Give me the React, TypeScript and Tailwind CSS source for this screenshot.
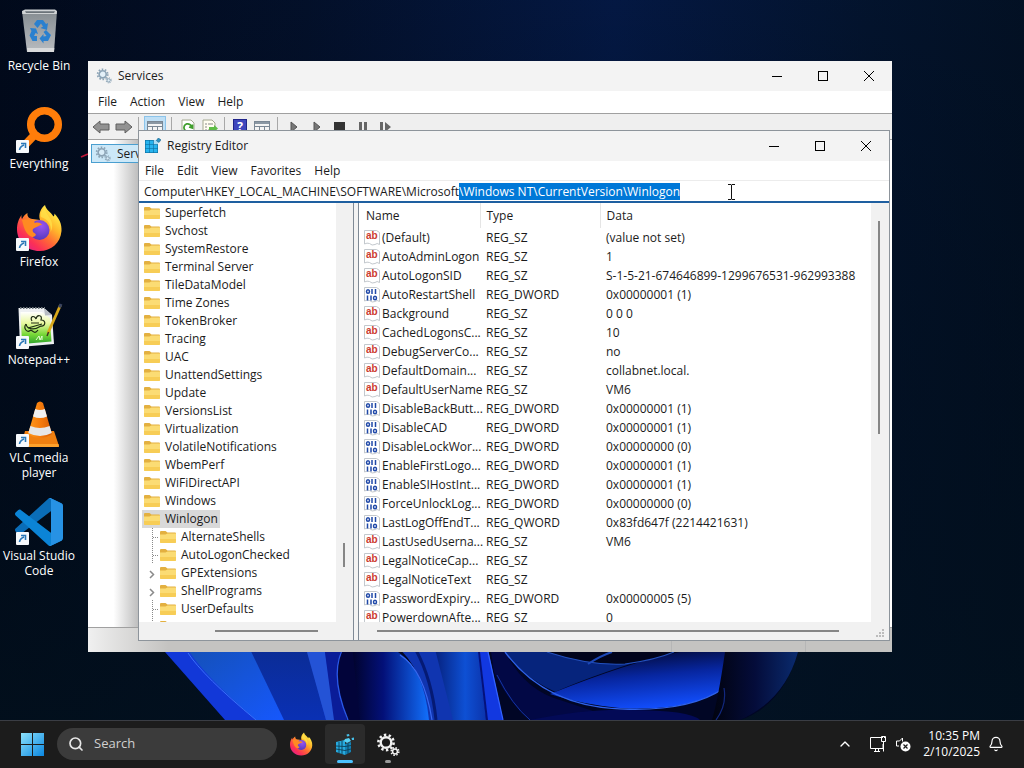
import { useEffect, useRef } from "react";
import type { ReactNode } from "react";
import { Bell, ChevronUp, Search } from "lucide-react";

/* ---------- Wallpaper ---------- */

function Wallpaper() {
  return (
    <svg className="absolute inset-0 h-full w-full" viewBox="0 0 1024 720" preserveAspectRatio="none" aria-hidden="true">
      <defs>
        <linearGradient id="wpBase" x1="0" x2="1" y1="0" y2="0">
          <stop offset="0" stopColor="#010a1c" />
          <stop offset="0.3" stopColor="#03112c" />
          <stop offset="0.6" stopColor="#041a48" />
          <stop offset="0.85" stopColor="#031530" />
          <stop offset="1" stopColor="#031226" />
        </linearGradient>
        <linearGradient id="wpFade" x1="0" x2="0" y1="0" y2="1">
          <stop offset="0" stopColor="#000510" stopOpacity="0.1" />
          <stop offset="1" stopColor="#02101c" stopOpacity="0.8" />
        </linearGradient>
        <linearGradient id="wpA" x1="0" x2="1" y1="0" y2="1">
          <stop offset="0" stopColor="#1450b4" />
          <stop offset="1" stopColor="#1658ff" />
        </linearGradient>
        <linearGradient id="wpB" x1="0" x2="0" y1="0" y2="1">
          <stop offset="0" stopColor="#0b2c94" />
          <stop offset="1" stopColor="#0a30b4" />
        </linearGradient>
        <linearGradient id="wpC" x1="0" x2="1" y1="0" y2="0">
          <stop offset="0" stopColor="#01032c" />
          <stop offset="0.4" stopColor="#031078" />
          <stop offset="1" stopColor="#1272ff" />
        </linearGradient>
        <linearGradient id="wpD" x1="0" x2="1" y1="0" y2="0">
          <stop offset="0" stopColor="#06207c" />
          <stop offset="0.6" stopColor="#0e50d4" />
          <stop offset="1" stopColor="#0b34ac" />
        </linearGradient>
        <linearGradient id="wpE" x1="0.3" x2="0.6" y1="0" y2="1">
          <stop offset="0" stopColor="#02072e" />
          <stop offset="0.45" stopColor="#0726a0" />
          <stop offset="1" stopColor="#124fff" />
        </linearGradient>
        <linearGradient id="wpF" x1="0" x2="1" y1="0" y2="0">
          <stop offset="0" stopColor="#01030f" />
          <stop offset="0.5" stopColor="#040c3a" />
          <stop offset="1" stopColor="#0a2b6e" />
        </linearGradient>
      </defs>
      <rect width="1024" height="720" fill="url(#wpBase)" />
      <rect width="1024" height="720" fill="url(#wpFade)" />
      <path d="M160 645 L165 652 L225 720 H740 Q785 705 800 645 Z" fill="#010625" />
      <path d="M160 645 L165 652 L225 720 H345 L340 645 Z" fill="#1238d8" />
      <path d="M185 645 Q200 672 256 720 H290 L250 645 Z" fill="url(#wpA)" />
      <path d="M188 653 Q203 676 256 720" fill="none" stroke="#3970f8" strokeWidth="1" />
      <path d="M248 645 L284 720 H326 L306 645 Z" fill="url(#wpB)" />
      <path d="M305 645 L326 720 H335 L324 645 Z" fill="#2453d6" />
      <path d="M324 645 L334 720 H347 Q333 670 341 652 Z" fill="#0a1c98" />
      <path d="M345 645 Q328 672 348 720 H400 V645 Z" fill="#02043a" />
      <path d="M345 645 Q328 672 348 720" fill="none" stroke="#2a58e8" strokeWidth="1.3" />
      <path d="M352 645 L360 720 H430 Q425 670 398 652 Z" fill="url(#wpC)" />
      <path d="M395 645 Q424 668 429 720 H454 L435 645 Z" fill="#1035b0" />
      <path d="M400 655 Q424 670 432 720" fill="none" stroke="#3868f0" strokeWidth="1.2" />
      <path d="M416 650 Q432 680 436 720" fill="none" stroke="#051a74" strokeWidth="3" />
      <path d="M434 645 L453 720 H486 L478 645 Z" fill="url(#wpD)" />
      <path d="M477 645 L486 720 H503 L487 645 Z" fill="#1238e0" />
      <path d="M479 652 L487 720" stroke="#04127a" strokeWidth="2" />
      <path d="M488 652 L503 720" stroke="#3463ff" strokeWidth="1.2" />
      <path d="M494 672 Q510 705 530 720 H620 L560 700 Q525 690 505 652 L490 645 Z" fill="#020845" />
      <path d="M497 675 Q512 705 530 720" fill="none" stroke="#1435a4" strokeWidth="1" />
      <path d="M505 652 Q545 706 640 709 Q580 690 555 692 Q600 672 670 652 Z" fill="#06247c" />
      <path d="M550 694 Q630 662 680 652 H728 Q722 670 724 688 Q690 712 620 708 Q580 704 550 694 Z" fill="url(#wpE)" />
      <path d="M505 652 Q545 706 620 709 Q690 712 724 688" fill="none" stroke="#2f62e8" strokeWidth="1.3" />
      <path d="M547 652 Q590 666 625 664 Q655 660 674 652 Z" fill="#01041c" />
      <path d="M547 652 Q590 666 625 664 Q655 660 674 652" fill="none" stroke="#2350bd" strokeWidth="1.2" />
      <path d="M588 664 Q600 656 612 652" fill="none" stroke="#1c48b8" strokeWidth="2" />
      <path d="M530 720 Q590 708 630 710 Q690 710 700 720 Z" fill="#030a56" />
      <path d="M725 652 Q718 700 712 720 H740 Q785 700 798 652 Z" fill="url(#wpF)" />
      <path d="M724 688 Q727 705 716 720" fill="none" stroke="#12287e" strokeWidth="1.2" />
      <path d="M81 157 L88 154" stroke="#c01838" strokeWidth="1.6" />
    </svg>
  );
}

/* ---------- Desktop icons ---------- */

function RecycleBinIcon() {
  return (
    <svg viewBox="0 0 48 48" className="h-12 w-12" aria-hidden="true">
      <defs>
        <linearGradient id="bin" x1="0" x2="0" y1="0" y2="1">
          <stop offset="0" stopColor="#858c91" />
          <stop offset="1" stopColor="#b9bcc0" />
        </linearGradient>
      </defs>
      <path d="M7 3 L42 3 L39 44 H12 Z" fill="url(#bin)" />
      <path d="M7 3 L10 1.5 H40 L42 3 L41.7 6 H7.3 Z" fill="#d0d3d5" />
      <path d="M10 3.2 H40 L39 5 H11 Z" fill="#6a7278" />
      <path d="M12 40 H39.3 L39 44 H12.4 Z" fill="#d9dadb" />
      <g fill="#2a80cf">
        <path d="M19 16 L22 12 H28 L31 16 L33 15 L32 22 L25.5 20 L28 18.5 L26 15.5 L22.5 20 Z" />
        <path d="M15 20 L21 20.500 L23 26 L20.500 25 L19 28 H22 V33 H17.500 L14.500 27.500 L16.500 23 Z" />
        <path d="M31 22 L36 27 L33 33 H28.500 V35.500 L24.500 30.500 L28.500 26 V28.500 L31.500 28 L28.500 24 Z" />
      </g>
    </svg>
  );
}

function EverythingIcon() {
  return (
    <svg viewBox="0 0 48 48" className="h-12 w-12" aria-hidden="true">
      <circle cx="29.500" cy="18.500" r="13.800" fill="none" stroke="#ff7d0a" strokeWidth="7.500" />
      <path d="M19 29.500 L8 41" stroke="#ff7d0a" strokeWidth="8" />
    </svg>
  );
}

function FirefoxIcon({ className }: { className: string }) {
  return (
    <svg viewBox="0 0 48 48" className={className} aria-hidden="true">
      <defs>
        <linearGradient id="ffBody" x1="0.85" x2="0.15" y1="0.1" y2="0.95">
          <stop offset="0" stopColor="#fff34f" />
          <stop offset="0.3" stopColor="#ffb72b" />
          <stop offset="0.55" stopColor="#ff6a35" />
          <stop offset="0.8" stopColor="#fb2f57" />
          <stop offset="1" stopColor="#e0218a" />
        </linearGradient>
        <radialGradient id="ffCore" cx="0.6" cy="0.3" r="0.8">
          <stop offset="0" stopColor="#9a55f0" />
          <stop offset="1" stopColor="#4a35b8" />
        </radialGradient>
      </defs>
      <path
        d="M30 1 C31 6 36 8 38.500 12.500 C39.500 11.500 39.500 10.500 39.300 9.500 C44 14 47 20 46.500 27 C45.500 39 36.500 47 24.500 47 C12 47 2.500 38 2 26 C1.800 19.500 4 14.500 6.500 11 C6.300 13 6.500 14 7 15 C8.500 12 10.500 10 12.500 9 C12 12 13.500 14.500 17.500 15 L25 16 C23 10 26 4 30 1 Z"
        fill="url(#ffBody)"
      />
      <circle cx="24.500" cy="26" r="10" fill="url(#ffCore)" />
      <path
        d="M7 16 C12 14 18 16 20 19 C23 18 26 19 27 21 C24 21 22.500 23 19.500 24 C17 25 17 28 20 29.500 C22 30.500 20 33 17 33 C10 30 8.500 22 7 16 Z"
        fill="#ff8a22"
      />
      <path d="M26 13 C33 15 37 21 35.500 28 C38 24 38 18 34 13 C32 10 30 7 30 4 C26 7 25 10 26 13 Z" fill="#ffe14a" opacity="0.75" />
    </svg>
  );
}

function NotepadIcon() {
  return (
    <svg viewBox="0 0 48 48" className="h-12 w-12" aria-hidden="true">
      <defs>
        <linearGradient id="npp" x1="0" x2="0" y1="0" y2="1">
          <stop offset="0" stopColor="#ffffff" />
          <stop offset="0.35" stopColor="#e9f8a0" />
          <stop offset="0.7" stopColor="#78d838" />
          <stop offset="1" stopColor="#2da32c" />
        </linearGradient>
      </defs>
      <path d="M3.500 6 H29 L37 13 L39 42 L5 45 Z" fill="#eef0f2" />
      <path d="M5.500 10 H27 L35 16 L36.500 39.500 L7 42 Z" fill="url(#npp)" />
      <path d="M29 6 L37 13 L30 13.500 Z" fill="#b7bcc2" />
      <path d="M5 6 H30" stroke="#6f777d" strokeWidth="2" strokeDasharray="1.500 1.500" />
      <g fill="none" stroke="#1d2b13" strokeWidth="1.200">
        <path d="M17 19 C14 14 20 13 21 17 C22 12 28 13 26 18 C32 18 30 25 26 24 C20 28 12 28 11 22" />
        <path d="M11 22 C8 26 12 32 16 28 C19 30 20 32 23 28 M13 26 L27 22 M16 21 H24" />
        <path d="M21 38 L24 34 L25 38 L27 34 V38" stroke="#e6ffd2" strokeWidth="1" />
      </g>
      <path d="M45.500 3 L33 31" stroke="#d9a81a" strokeWidth="2.800" />
      <path d="M46 2 L44.500 5.500" stroke="#3a4460" strokeWidth="3" />
      <path d="M33.600 30 L32 34" stroke="#413022" strokeWidth="1.500" />
    </svg>
  );
}

function VlcIcon() {
  return (
    <svg viewBox="0 0 48 48" className="h-12 w-12" aria-hidden="true">
      <defs>
        <linearGradient id="cone" x1="0" x2="1" y1="0" y2="0">
          <stop offset="0" stopColor="#ff9a1c" />
          <stop offset="0.5" stopColor="#f67c0c" />
          <stop offset="1" stopColor="#d95f05" />
        </linearGradient>
      </defs>
      <path d="M10 31 H39 L44 46 H6 Z" fill="#f08010" />
      <path d="M6 44 H43.500 L44 47 H5.500 Z" fill="#ffa22c" />
      <path d="M22 3 Q25 0 28 3 L37 34 Q25 42 13 34 Z" fill="url(#cone)" />
      <path d="M20.200 9 Q25 11 29.800 9 L32 16.500 Q25 19.500 18 16.500 Z" fill="#f1f1f1" />
      <path d="M15.400 26 Q25 30 34.600 26 L36.800 33 Q25 39 13.300 33 Z" fill="#e6e6e6" />
    </svg>
  );
}

function VsCodeIcon() {
  return (
    <svg viewBox="0 0 100 100" className="h-12 w-12" aria-hidden="true">
      <path
        fill="#0a6db8"
        d="M96.461 10.796 L75.857 .876 C73.472-.273 70.622.212 68.750 2.083 L1.299 63.583 C-.516 65.237-.514 68.094 1.303 69.745 L6.813 74.754 C8.298 76.104 10.535 76.204 12.134 74.991 L93.361 13.370 C96.086 11.303 100 13.246 100 16.667 V16.428 C100 14.027 98.625 11.838 96.461 10.796 Z"
      />
      <path
        fill="#0b84d6"
        d="M96.461 89.204 L75.857 99.125 C73.472 100.273 70.622 99.788 68.750 97.917 L1.299 36.417 C-.516 34.763-.514 31.906 1.303 30.255 L6.813 25.246 C8.298 23.896 10.535 23.796 12.134 25.010 L93.361 86.630 C96.086 88.697 100 86.754 100 83.333 V83.573 C100 85.974 98.625 88.162 96.461 89.204 Z"
      />
      <path
        fill="#2792e4"
        d="M75.858 99.126 C73.472 100.274 70.622 99.789 68.750 97.917 C71.056 100.223 75 98.590 75 95.328 V4.672 C75 1.410 71.056-.223 68.750 2.083 C70.622.211 73.472-.274 75.858.874 L96.459 10.781 C98.623 11.822 100 14.011 100 16.413 V83.587 C100 85.989 98.623 88.179 96.459 89.220 Z"
      />
    </svg>
  );
}

function ShortcutBadge() {
  return (
    <svg viewBox="0 0 13 13" className="absolute bottom-px left-px h-[13px] w-[13px]" aria-hidden="true">
      <rect width="13" height="13" rx="1" fill="#f6f9fc" />
      <path d="M3.500 10 Q4 6.500 8 5 M5 3.500 H9.500 V8" fill="none" stroke="#2b78b8" strokeWidth="1.600" />
    </svg>
  );
}

function DesktopIcon({ label, icon, shortcut }: { label: string; icon: ReactNode; shortcut?: boolean }) {
  return (
    <button type="button" className="flex h-[98px] w-[78px] flex-col items-center gap-[2px] pt-2">
      <span className="relative block h-12 w-12 shrink-0">
        {icon}
        {shortcut && <ShortcutBadge />}
      </span>
      <span className="text-xs leading-[15px] text-white">{label}</span>
    </button>
  );
}

/* ---------- Window chrome ---------- */

function GearsIcon({ className, color, hole }: { className: string; color: string; hole: string }) {
  return (
    <svg viewBox="0 0 24 24" className={className} aria-hidden="true">
      <circle cx="10" cy="9.500" r="7.600" fill="none" stroke={color} strokeWidth="2.600" strokeDasharray="2.400 2.380" />
      <circle cx="10" cy="9.500" r="5.300" fill={hole} stroke={color} strokeWidth="2.400" />
      <circle cx="19" cy="18.500" r="3.800" fill="none" stroke={color} strokeWidth="1.600" strokeDasharray="1.500 1.480" />
      <circle cx="19" cy="18.500" r="2.400" fill={hole} stroke={color} strokeWidth="1.500" />
    </svg>
  );
}

function RegistryIcon({ className }: { className: string }) {
  return (
    <svg viewBox="0 0 16 16" className={className} aria-hidden="true">
      <rect x="0" y="2" width="13" height="13" fill="#0b6c9c" />
      <g fill="#28b4ee">
        <rect x="0.600" y="2.600" width="3.600" height="3.600" />
        <rect x="4.700" y="2.600" width="3.600" height="3.600" />
        <rect x="0.600" y="6.700" width="3.600" height="3.600" />
        <rect x="4.700" y="6.700" width="3.600" height="3.600" />
        <rect x="8.800" y="6.700" width="3.600" height="3.600" />
        <rect x="0.600" y="10.800" width="3.600" height="3.600" />
        <rect x="4.700" y="10.800" width="3.600" height="3.600" />
        <rect x="8.800" y="10.800" width="3.600" height="3.600" />
      </g>
      <rect x="8.800" y="2" width="4.200" height="4.200" fill="#a9dcf3" />
      <path d="M13.300 0 L15.900 1.800 L14 4.500 L11.400 2.600 Z" fill="#2e93c4" stroke="#0b5f8c" strokeWidth="0.600" />
    </svg>
  );
}

function RegistryTaskIcon() {
  return (
    <svg viewBox="0 0 24 24" className="h-6 w-6" aria-hidden="true">
      <path d="M3 9 L12 7 V22 L3 19 Z" fill="#27a9dd" />
      <path d="M12 11 L18 9 V19 L12 22 Z" fill="#1481b4" />
      <path d="M6 9 V20 M9 8 V21 M3 13 L12 13.500 L18 12.500 M3 16 L12 17.500 L18 16 M15 10 V21" stroke="#0b3f58" strokeWidth="0.900" fill="none" />
      <path d="M12 6 L16 5 L18 8 L14 10 L11 8 Z" fill="#56d0f5" />
      <path d="M13.500 1.500 L16 1 L16.500 3 L14 3.500 Z M18.500 5 L21 4.500 L21 7 L19 7 Z" fill="#46bfe8" />
    </svg>
  );
}

function WindowButtons() {
  const shared = "flex h-full w-[46px] items-center justify-center";
  return (
    <div className="flex h-full text-black">
      <button type="button" aria-label="Minimize" className={shared}>
        <svg viewBox="0 0 12 12" className="h-3 w-3" aria-hidden="true">
          <path d="M1 6.500 H11" stroke="currentColor" />
        </svg>
      </button>
      <button type="button" aria-label="Maximize" className={shared}>
        <svg viewBox="0 0 12 12" className="h-3 w-3" aria-hidden="true">
          <rect x="1.500" y="1.500" width="9" height="9" fill="none" stroke="currentColor" />
        </svg>
      </button>
      <button type="button" aria-label="Close" className={shared}>
        <svg viewBox="0 0 12 12" className="h-3 w-3" aria-hidden="true">
          <path d="M1 1 L11 11 M11 1 L1 11" stroke="currentColor" />
        </svg>
      </button>
    </div>
  );
}

function TitleBar({ title, icon }: { title: string; icon: ReactNode }) {
  return (
    <header className="flex h-[30px] shrink-0 items-center bg-[#f3f3f3] pl-[6px]">
      {icon}
      <h2 className="ml-[6px] flex-1">{title}</h2>
      <WindowButtons />
    </header>
  );
}

function MenuBar({ items }: { items: string[] }) {
  return (
    <nav className="flex h-full items-center gap-[13px]">
      {items.map((item) => (
        <button key={item} type="button">
          {item}
        </button>
      ))}
    </nav>
  );
}

/* ---------- Services window ---------- */

function ToolSeparator() {
  return <span className="h-5 w-px bg-[#a8a8a8]" />;
}

function ArrowTool({ flip }: { flip?: boolean }) {
  return (
    <svg viewBox="0 0 18 14" className="h-[14px] w-[18px]" aria-hidden="true">
      <path
        d={flip ? "M17 7 L10 1 V4 H1 V10 H10 V13 Z" : "M1 7 L8 1 V4 H17 V10 H8 V13 Z"}
        fill="#929292"
        stroke="#5e5e5e"
      />
    </svg>
  );
}

function TableTool() {
  return (
    <svg viewBox="0 0 16 14" className="h-[14px] w-4" aria-hidden="true">
      <rect x="0.500" y="1.500" width="15" height="12" fill="#f4f4f4" stroke="#7a8794" />
      <rect x="1" y="2" width="14" height="2" fill="#8a97a3" />
      <path d="M1 6.500 H15 M5.500 6 V13 M10.500 6 V13" stroke="#7a8794" />
    </svg>
  );
}

function ServicesToolbar() {
  return (
    <div className="flex h-[25px] shrink-0 items-center bg-[#efefef] pl-1">
      <button type="button" aria-label="Back" className="mr-[5px]"><ArrowTool /></button>
      <button type="button" aria-label="Forward" className="mr-[5px]"><ArrowTool flip /></button>
      <ToolSeparator />
      <button type="button" aria-label="Show console tree" className="mx-[5px] flex h-[22px] w-[22px] items-center justify-center border border-[#8cc4ea] bg-[#bfdff5]">
        <TableTool />
      </button>
      <ToolSeparator />
      <button type="button" aria-label="Refresh" className="ml-2">
        <svg viewBox="0 0 16 16" className="h-4 w-4" aria-hidden="true">
          <path d="M2 1 H11 L14 4 V16 H2 Z" fill="#fff" stroke="#a4a890" />
          <path d="M11.500 8 A3.800 3.800 0 1 0 9.500 12 M9 8 L12.500 9 L12.500 5.500" fill="none" stroke="#3f9e2c" strokeWidth="1.800" />
        </svg>
      </button>
      <button type="button" aria-label="Export list" className="mx-[6px]">
        <svg viewBox="0 0 16 16" className="h-4 w-4" aria-hidden="true">
          <path d="M1 1 H10 L13 4 V15 H1 Z" fill="#fffdf0" stroke="#a4a890" />
          <path d="M3 5 H5 M6 5 H11 M3 8 H5 M3 11 H5 M6 11 H9" stroke="#888" />
          <path d="M7 8 H12 V6 L16 9.500 L12 13 V11 H7 Z" fill="#5ebc45" />
        </svg>
      </button>
      <ToolSeparator />
      <button type="button" aria-label="Help" className="ml-2 flex h-4 w-[14px] items-center justify-center border border-[#20258a] bg-[#3f47bd] text-xs leading-none font-bold text-white">
        ?
      </button>
      <button type="button" aria-label="Properties" className="mx-[7px]"><TableTool /></button>
      <ToolSeparator />
      <div className="ml-2 flex items-center gap-[7px] text-[#555]">
        <button type="button" aria-label="Start">
          <svg viewBox="0 0 16 12" className="h-3 w-4" aria-hidden="true"><path d="M5 1 L11 6 L5 11 Z" fill="#777" stroke="#555" /></svg>
        </button>
        <button type="button" aria-label="Resume">
          <svg viewBox="0 0 16 12" className="h-3 w-4" aria-hidden="true"><path d="M5 1 L11 6 L5 11 Z" fill="#777" stroke="#555" /></svg>
        </button>
        <button type="button" aria-label="Stop">
          <svg viewBox="0 0 16 12" className="h-3 w-4" aria-hidden="true"><rect x="2" y="1" width="11" height="11" fill="#333" /></svg>
        </button>
        <button type="button" aria-label="Pause">
          <svg viewBox="0 0 16 12" className="h-3 w-4" aria-hidden="true"><path d="M4 1 H7 V12 H4 Z M9 1 H12 V12 H9 Z" fill="#666" /></svg>
        </button>
        <button type="button" aria-label="Restart">
          <svg viewBox="0 0 16 12" className="h-3 w-4" aria-hidden="true"><path d="M2 1 H5 V12 H2 Z M7 1 L13 6 L7 11 Z" fill="#666" /></svg>
        </button>
      </div>
    </div>
  );
}

function ServicesWindow() {
  return (
    <section
      aria-label="Services"
      className="absolute top-[61px] left-[88px] flex h-[591px] w-[804px] flex-col bg-white text-xs text-[#1b1b1b]"
    >
      <div className="pl-[2px] bg-[#f3f3f3]">
        <TitleBar title="Services" icon={<GearsIcon className="h-4 w-4" color="#8ba3b5" hole="#e3f0f8" />} />
      </div>
      <div className="h-[23px] shrink-0 border-b border-[#a0a0a0] pl-[10px]">
        <MenuBar items={["File", "Action", "View", "Help"]} />
      </div>
      <ServicesToolbar />
      <div className="flex flex-1 border-y border-[#a0a0a0] bg-white">
        <div className="flex w-[51px] flex-col bg-linear-to-r from-white from-50% to-[#bcbcbc] px-[3px] pt-1">
          <div className="flex h-[19px] w-[120px] shrink-0 items-center gap-[6px] border border-[#4a9fd0] bg-[#cce8f8] pl-[3px]">
            <GearsIcon className="h-4 w-4 shrink-0" color="#8ba3b5" hole="#d8ecf8" />
            <span>Services</span>
          </div>
        </div>
      </div>
      <footer className="flex h-6 shrink-0 justify-end bg-linear-to-r from-[#f0f0f0] to-[#c4c3c1] to-10% pr-[86px]">
        <span className="w-[135px] border-x border-[#b6b6b6]" />
      </footer>
    </section>
  );
}

/* ---------- Registry Editor ---------- */

type TreeNode = { name: string; depth: 0 | 1; selected?: boolean; expandable?: boolean };

const rootKeys = [
  "Superfetch", "Svchost", "SystemRestore", "Terminal Server", "TileDataModel", "Time Zones", "TokenBroker",
  "Tracing", "UAC", "UnattendSettings", "Update", "VersionsList", "Virtualization", "VolatileNotifications",
  "WbemPerf", "WiFiDirectAPI", "Windows",
];

const tree: TreeNode[] = [
  ...rootKeys.map((name): TreeNode => ({ name, depth: 0 })),
  { name: "Winlogon", depth: 0, selected: true },
  { name: "AlternateShells", depth: 1 },
  { name: "AutoLogonChecked", depth: 1 },
  { name: "GPExtensions", depth: 1, expandable: true },
  { name: "ShellPrograms", depth: 1, expandable: true },
  { name: "UserDefaults", depth: 1 },
  { name: "", depth: 1 },
];

type RegType = "REG_SZ" | "REG_DWORD" | "REG_QWORD";

const values: [string, RegType, string][] = [
  ["(Default)", "REG_SZ", "(value not set)"],
  ["AutoAdminLogon", "REG_SZ", "1"],
  ["AutoLogonSID", "REG_SZ", "S-1-5-21-674646899-1299676531-962993388"],
  ["AutoRestartShell", "REG_DWORD", "0x00000001 (1)"],
  ["Background", "REG_SZ", "0 0 0"],
  ["CachedLogonsC...", "REG_SZ", "10"],
  ["DebugServerCo...", "REG_SZ", "no"],
  ["DefaultDomain...", "REG_SZ", "collabnet.local."],
  ["DefaultUserName", "REG_SZ", "VM6"],
  ["DisableBackButt...", "REG_DWORD", "0x00000001 (1)"],
  ["DisableCAD", "REG_DWORD", "0x00000001 (1)"],
  ["DisableLockWor...", "REG_DWORD", "0x00000000 (0)"],
  ["EnableFirstLogo...", "REG_DWORD", "0x00000001 (1)"],
  ["EnableSIHostInt...", "REG_DWORD", "0x00000001 (1)"],
  ["ForceUnlockLog...", "REG_DWORD", "0x00000000 (0)"],
  ["LastLogOffEndT...", "REG_QWORD", "0x83fd647f (2214421631)"],
  ["LastUsedUserna...", "REG_SZ", "VM6"],
  ["LegalNoticeCap...", "REG_SZ", ""],
  ["LegalNoticeText", "REG_SZ", ""],
  ["PasswordExpiry...", "REG_DWORD", "0x00000005 (5)"],
  ["PowerdownAfte...", "REG_SZ", "0"],
];

function FolderIcon() {
  return (
    <svg viewBox="0 0 16 14" className="h-[14px] w-4 shrink-0" aria-hidden="true">
      <path d="M0 2 Q0 1 1 1 H5.500 L7.500 2.500 H15 Q16 2.500 16 3.500 V7 H0 Z" fill="#e3b040" />
      <path d="M0 4.500 H5.500 L7.500 3.500 H16 V12 Q16 13 15 13 H1 Q0 13 0 12 Z" fill="#fbdc74" />
      <path d="M0 9 H16 V12 Q16 13 15 13 H1 Q0 13 0 12 Z" fill="#f7cd56" />
    </svg>
  );
}

function ValueIcon({ text }: { text: boolean }) {
  return (
    <svg viewBox="0 0 16 16" className="h-4 w-4 shrink-0" aria-hidden="true">
      <path d="M0.500 0.500 H12.500 L15.500 2.500 V14.500 Q13 12.500 11 14.500 Q8 16 5.500 13.500 Q3 12.500 0.500 14 Z" fill="#fff" stroke="#c3c8cd" />
      {text ? (
        <text x="2" y="9" fontFamily="Liberation Sans, sans-serif" fontSize="10" fontWeight="700" fill="#cc3a30">ab</text>
      ) : (
        <g fill="none" stroke="#1f48a8" strokeWidth="1.500">
          <ellipse cx="4" cy="4.500" rx="1.500" ry="1.800" />
          <path d="M8 2 V7 M11.500 2 V7 M3.500 8.500 V13.500 M7 8.500 V13.500" />
          <ellipse cx="11" cy="11" rx="1.500" ry="1.800" />
        </g>
      )}
    </svg>
  );
}

function TreeGuide({ expandable }: { expandable?: boolean }) {
  return (
    <svg viewBox="0 0 16 18" className="h-[18px] w-4 shrink-0" aria-hidden="true">
      {expandable ? (
        <path d="M8 7 L11.500 10.500 L8 14" fill="none" stroke="#8a8a8a" strokeWidth="1.500" />
      ) : (
        <path d="M10.500 0 V18 M11 9.500 H16" fill="none" stroke="#8a8a8a" strokeDasharray="1 1" />
      )}
    </svg>
  );
}

function KeyTree() {
  return (
    <div className="grid w-[215px] shrink-0 grid-cols-[minmax(0,1fr)_17px] grid-rows-[minmax(0,1fr)_18px] border-r border-[#7f8a96] bg-[#f1f1f1]">
      <ul className="overflow-hidden bg-white pt-px pl-[3px]">
        {tree.map((node) => (
          <li key={node.name} className="flex h-[18px] items-center">
            {node.depth === 1 && <TreeGuide expandable={node.expandable} />}
            <span
              className={
                node.selected
                  ? "flex h-[18px] items-center gap-[5px] bg-[#d9d9d9] px-[2px] whitespace-nowrap"
                  : "flex h-[18px] items-center gap-[5px] px-[2px] whitespace-nowrap"
              }
            >
              <FolderIcon />
              {node.name}
            </span>
          </li>
        ))}
      </ul>
      <div className="flex pt-[340px] pl-[7px]">
        <span className="h-6 w-[2px] bg-[#868686]" />
      </div>
      <div className="flex items-center pl-[76px]">
        <span className="h-[2px] w-[103px] bg-[#868686]" />
      </div>
    </div>
  );
}

function ValueList() {
  return (
    <div className="grid min-w-0 flex-1 grid-cols-[minmax(0,1fr)_18px] grid-rows-[minmax(0,1fr)_18px] border-l border-[#7f8a96] bg-[#f1f1f1]">
      <div className="overflow-hidden bg-white">
        <table className="w-full table-fixed border-collapse text-left whitespace-nowrap">
          <colgroup>
            <col className="w-[121px]" />
            <col className="w-[120px]" />
            <col />
          </colgroup>
          <thead>
            <tr className="h-[25px]">
              <th className="border-r border-[#e5e5e5] p-0 pl-[7px] font-normal">Name</th>
              <th className="border-r border-[#e5e5e5] p-0 pl-[6px] font-normal">Type</th>
              <th className="p-0 pl-[6px] font-normal">Data</th>
            </tr>
          </thead>
          <tbody>
            {values.map(([name, type, data]) => (
              <tr key={name} className="h-[19px]">
                <td className="p-0 pl-[5px]">
                  <span className="flex items-center gap-[2px]">
                    <ValueIcon text={type === "REG_SZ"} />
                    {name}
                  </span>
                </td>
                <td className="p-0 pl-[6px]">{type}</td>
                <td className="p-0 pl-[6px]">{data}</td>
              </tr>
            ))}
          </tbody>
        </table>
      </div>
      <div className="flex pt-[18px] pl-[7px]">
        <span className="h-[213px] w-[2px] bg-[#868686]" />
      </div>
      <div className="flex items-center pl-[18px]">
        <span className="h-[2px] w-[462px] bg-[#868686]" />
      </div>
      <svg viewBox="0 0 17 18" className="h-[18px] w-[17px]" aria-hidden="true">
        <path d="M11 7 h2 v2 h-2 Z M8 10 h2 v2 h-2 Z M11 10 h2 v2 h-2 Z M5 13 h2 v2 h-2 Z M8 13 h2 v2 h-2 Z M11 13 h2 v2 h-2 Z" fill="#bcbcbc" />
      </svg>
    </div>
  );
}

const basePath = "Computer\\HKEY_LOCAL_MACHINE\\SOFTWARE\\Microsoft";
const fullPath = basePath + "\\Windows NT\\CurrentVersion\\Winlogon";

function RegistryWindow() {
  const address = useRef<HTMLInputElement>(null);

  useEffect(() => {
    address.current?.focus();
    address.current?.setSelectionRange(basePath.length, fullPath.length);
  }, []);

  return (
    <section
      aria-label="Registry Editor"
      className="absolute top-[130px] left-[138px] flex h-[511px] w-[752px] flex-col border border-[#8d949b] bg-white text-xs text-[#1b1b1b]"
    >
      <TitleBar title="Registry Editor" icon={<RegistryIcon className="h-4 w-4" />} />
      <div className="h-5 shrink-0 border-b border-[#ececec] pl-[6px]">
        <MenuBar items={["File", "Edit", "View", "Favorites", "Help"]} />
      </div>
      <input
        ref={address}
        aria-label="Address"
        type="text"
        defaultValue={fullPath}
        className="h-[22px] w-full shrink-0 border-b-2 border-[#1e5fa0] px-[5px] outline-none selection:bg-[#0078d7] selection:text-white"
      />
      <div className="flex min-h-0 flex-1 gap-1 bg-[#f3f3f3]">
        <KeyTree />
        <ValueList />
      </div>
    </section>
  );
}

/* ---------- Taskbar ---------- */

function Taskbar() {
  return (
    <footer className="relative flex h-12 shrink-0 items-center border-t border-[#3a3d44] bg-[#1c1c1c] pb-px text-white">
      <button type="button" aria-label="Start" className="ml-5">
        <svg viewBox="0 0 24 24" className="h-6 w-6" aria-hidden="true">
          <defs>
            <linearGradient id="win" x1="0" x2="1" y1="0" y2="1">
              <stop offset="0" stopColor="#8ce2fc" />
              <stop offset="1" stopColor="#0a86e0" />
            </linearGradient>
          </defs>
          <path d="M1 1 H12 V12 H1 Z M13 1 H24 V12 H13 Z M1 13 H12 V24 H1 Z M13 13 H24 V24 H13 Z" fill="url(#win)" />
        </svg>
      </button>
      <label className="ml-[13px] flex h-8 w-[220px] items-center gap-[10px] rounded-full bg-[#3b3b3b] pl-[11px]">
        <Search className="h-4 w-4 shrink-0 text-[#e8e8e8]" strokeWidth={2.5} />
        <input type="text" aria-label="Search" placeholder="Search" className="w-full bg-transparent pr-4 text-[13px] outline-none placeholder:text-[#d0d0d0]" />
      </label>
      <button type="button" aria-label="Firefox" className="ml-3">
        <FirefoxIcon className="h-6 w-6" />
      </button>
      <button type="button" aria-label="Registry Editor" className="ml-3 flex h-10 w-10 flex-col items-center justify-end gap-[3px] rounded bg-[#2b2b2b] pb-px">
        <RegistryTaskIcon />
        <span className="h-[3px] w-4 rounded-full bg-[#4cc2ff]" />
      </button>
      <button type="button" aria-label="Services" className="ml-[3px] flex h-10 w-10 flex-col items-center justify-end gap-[3px] pb-px">
        <GearsIcon className="h-6 w-6" color="#f2f2f2" hole="#1c1c1c" />
        <span className="h-[3px] w-[6px] rounded-full bg-[#9a9a9a]" />
      </button>
      <div className="ml-auto flex items-center pr-5">
        <button type="button" aria-label="Show hidden icons" className="mr-4">
          <ChevronUp className="h-4 w-4" />
        </button>
        <button type="button" aria-label="Network" className="mr-2">
          <svg viewBox="0 0 18 18" className="h-[18px] w-[18px]" fill="none" stroke="currentColor" aria-hidden="true">
            <path d="M12 2.500 H1.500 V13.500 H14 V9 M5 16.500 H11 M6.500 14 V16 M9.500 14 V16" />
            <path d="M12.500 1.500 H16.500 V6.500 H12.500 Z M14.500 7 V16.500 M13.500 1 V3 M15.500 1 V3" />
          </svg>
        </button>
        <button type="button" aria-label="Volume muted" className="mr-3">
          <svg viewBox="0 0 16 16" className="h-4 w-4" fill="none" aria-hidden="true">
            <path d="M7.500 2 L4.500 5 H1.500 V10 H4 M7.500 2 V5.500" stroke="#fff" />
            <circle cx="10.500" cy="10.500" r="5" fill="#fff" />
            <path d="M8.500 8.500 L12.500 12.500 M12.500 8.500 L8.500 12.500" stroke="#1c1c1c" strokeWidth="1.200" />
          </svg>
        </button>
        <div className="mr-2 text-right text-xs leading-4">
          <div>10:35 PM</div>
          <div>2/10/2025</div>
        </div>
        <button type="button" aria-label="Notifications">
          <Bell className="h-4 w-4" strokeWidth={1.75} />
        </button>
      </div>
    </footer>
  );
}

/* ---------- Desktop ---------- */

export default function App() {
  return (
    <div className="flex h-screen flex-col overflow-hidden bg-[#020c1e] font-['Open_Sans','Noto_Sans',sans-serif]">
      <main className="relative min-h-0 flex-1">
        <Wallpaper />
        <div className="relative flex w-[78px] flex-col">
          <DesktopIcon label="Recycle Bin" icon={<RecycleBinIcon />} />
          <DesktopIcon label="Everything" icon={<EverythingIcon />} shortcut />
          <DesktopIcon label="Firefox" icon={<FirefoxIcon className="h-12 w-12" />} shortcut />
          <DesktopIcon label="Notepad++" icon={<NotepadIcon />} shortcut />
          <DesktopIcon label="VLC media player" icon={<VlcIcon />} shortcut />
          <DesktopIcon label="Visual Studio Code" icon={<VsCodeIcon />} shortcut />
        </div>
        <ServicesWindow />
        <RegistryWindow />
        <svg viewBox="0 0 9 18" className="absolute top-[183px] left-[727px] h-[18px] w-[9px]" aria-hidden="true">
          <path d="M1 1.500 H4 L4.500 2 L5 1.500 H8 M4.500 2 V16 M1 16.500 H4 L4.500 16 L5 16.500 H8" fill="none" stroke="#111" />
        </svg>
      </main>
      <Taskbar />
    </div>
  );
}
